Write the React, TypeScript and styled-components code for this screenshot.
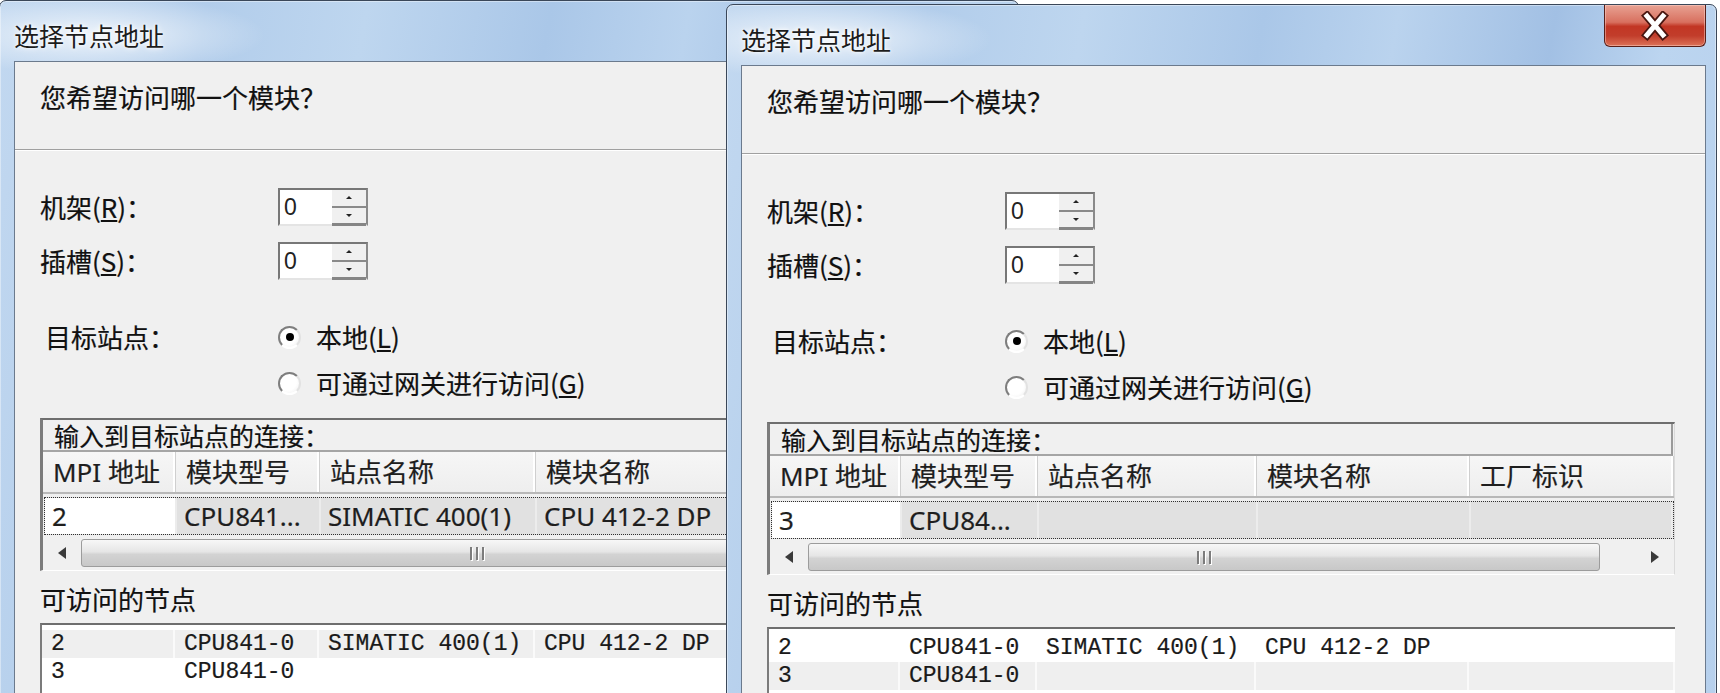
import React from 'react';
import styled, { createGlobalStyle } from 'styled-components';

const CJK = `"Noto Sans CJK SC", "Noto Sans", sans-serif`;
const UI = `"Noto Sans", "Noto Sans CJK SC", sans-serif`;
const MONO = `"Liberation Mono", "Noto Sans CJK SC", monospace`;

const GlobalStyle = createGlobalStyle`
  html, body {
    margin: 0;
    padding: 0;
    background: #fff;
  }
  body {
    font-family: ${CJK};
    color: #111;
  }
`;

const Desktop = styled.div`
  position: relative;
  width: 1720px;
  height: 693px;
  overflow: hidden;
  background: #fff;
`;

const Window = styled.div<{ $left: number; $top: number; $width: number; $z: number }>`
  position: absolute;
  left: ${p => p.$left}px;
  top: ${p => p.$top}px;
  width: ${p => p.$width}px;
  height: 760px;
  z-index: ${p => p.$z};
  box-sizing: border-box;
  display: flex;
  flex-direction: column;
  padding: 0 10px 0 14px;
  border: 1px solid #3a4759;
  border-radius: 7px 7px 0 0;
  box-shadow: inset 0 0 0 1px rgba(255, 255, 255, 0.4);
  background:
    radial-gradient(ellipse 170px 40px at 95px 34px, rgba(255, 255, 255, 0.75), rgba(255, 255, 255, 0) 100%),
    linear-gradient(100deg, #c2d8f0 0%, #b2cdeb 18%, #bed6ef 32%, #aac7e8 48%, #bad3ee 60%,
      #a2c0e4 74%, #bcd5f0 84%, #b6d0ed 100%);
`;

const TitleBar = styled.div`
  flex: none;
  height: 60px;
  display: flex;
  align-items: flex-start;
  justify-content: space-between;
`;

const Title = styled.div`
  margin-top: 21px;
  font-family: ${CJK};
  font-size: 25px;
  line-height: 26px;
  color: #1c1c1c;
  text-shadow: 0 0 6px #fff, 0 0 3px #fff;
`;

const CloseButton = styled.div`
  width: 102px;
  height: 42px;
  box-sizing: border-box;
  border: 1px solid #5a1f18;
  border-top: none;
  border-radius: 0 0 6px 6px;
  display: flex;
  align-items: center;
  justify-content: center;
  box-shadow: inset 0 0 0 1px rgba(255, 220, 210, 0.45);
  background: linear-gradient(#e8a293 0%, #d8705f 42%, #c23624 52%, #c23d2b 75%, #dc7258 100%);
`;

const Client = styled.div`
  flex: 1;
  display: flex;
  flex-direction: column;
  background: #f0f0f0;
  border: 1px solid #6b7a8d;
  -webkit-text-stroke: 0.2px currentColor;
`;

const Question = styled.div`
  flex: none;
  height: 88px;
  box-sizing: border-box;
  padding: 21px 25px 0;
  font-size: 26px;
  line-height: 28px;
  border-bottom: 1px solid #a0a0a0;
  box-shadow: 0 1px 0 #fff;
`;

const Body = styled.div`
  display: flex;
  flex-direction: column;
  padding: 38px 30px 0 25px;
`;

const Fields = styled.div`
  display: flex;
  flex-direction: column;
  gap: 16px;
`;

const FieldRow = styled.div`
  display: grid;
  grid-template-columns: 238px auto;
  align-items: center;
  height: 38px;
`;

const Label = styled.span<{ $indent?: number }>`
  font-size: 26px;
  line-height: 30px;
  padding-left: ${p => p.$indent ?? 0}px;
  white-space: nowrap;
`;

const Spin = styled.div`
  display: flex;
  width: 90px;
  height: 38px;
  box-sizing: border-box;
  background: #fff;
  border-top: 2px solid #777;
  border-left: 2px solid #777;
  border-right: 2px solid #8a8a8a;
  border-bottom: 2px solid #e4e4e4;
`;

const SpinValue = styled.div`
  flex: 1;
  padding-left: 4px;
  font-family: "Liberation Sans", sans-serif;
  font-size: 23px;
  line-height: 34px;
  color: #222;
  -webkit-text-stroke: 0;
`;

const SpinButtons = styled.div`
  width: 34px;
  display: flex;
  flex-direction: column;
  background: #f0f0f0;
  border-bottom: 3px solid #858585;
  margin-bottom: -2px;
`;

const SpinBtn = styled.div<{ $down?: boolean }>`
  flex: 1;
  display: flex;
  align-items: center;
  justify-content: center;
  & + & {
    border-top: 2px solid #8a8a8a;
  }
  &::after {
    content: '';
    border-left: 3px solid transparent;
    border-right: 3px solid transparent;
    ${p => (p.$down ? 'border-top: 3px solid #222;' : 'border-bottom: 3px solid #222;')}
  }
`;

const TargetRow = styled.div`
  display: grid;
  grid-template-columns: 238px auto;
  margin-top: 37px;
`;

const TargetLabel = styled(Label)`
  line-height: 40px;
`;

const RadioList = styled.div`
  display: flex;
  flex-direction: column;
  gap: 6px;
`;

const RadioRow = styled.div`
  display: flex;
  align-items: center;
  gap: 15px;
  height: 40px;
`;

const RadioCircle = styled.span<{ $checked?: boolean }>`
  flex: none;
  width: 23px;
  height: 23px;
  box-sizing: border-box;
  border-radius: 50%;
  border: 2px solid;
  border-color: #7e7e7e #e2e2e2 #fff #7e7e7e;
  background: radial-gradient(circle at 40% 40%, #fff 55%, #ececec 100%);
  display: flex;
  align-items: center;
  justify-content: center;
  &::after {
    content: '';
    display: ${p => (p.$checked ? 'block' : 'none')};
    width: 8px;
    height: 8px;
    border-radius: 50%;
    background: #000;
  }
`;

const GroupBox = styled.div`
  margin-top: 15px;
  display: flex;
  flex-direction: column;
  border-top: 2px solid #6e6e6e;
  border-left: 3px solid #7b7b7b;
  border-right: 1px solid #dadada;
  border-bottom: 1px solid #fff;
`;

const Caption = styled.div`
  height: 30px;
  padding-left: 11px;
  font-size: 25px;
  line-height: 30px;
  border-bottom: 2px solid #a5a5a5;
  border-right: 2px solid #9a9a9a;
  margin-right: 1px;
`;

const HeaderRow = styled.div`
  display: flex;
  height: 40px;
  border-bottom: 2px solid #b8b8b8;
  background: linear-gradient(#f6f6f6, #eeeeee);
`;

const HeaderCell = styled.div<{ $w?: number }>`
  ${p => (p.$w ? `width: ${p.$w}px; flex: none;` : 'flex: 1;')}
  box-sizing: border-box;
  padding-left: 10px;
  font-family: ${UI};
  font-size: 26px;
  line-height: 40px;
  color: #1e1e1e;
  white-space: nowrap;
  overflow: hidden;
  border-right: 1px solid #cfcfcf;
  box-shadow: inset -2px 0 0 #fff;
`;

const DataRow = styled.div`
  display: flex;
  height: 38px;
  margin: 3px 0 0 1px;
  box-sizing: border-box;
  border: 1px dotted #303030;
  background: #e1e1e1;
`;

const DataCell = styled.div<{ $w?: number; $white?: boolean }>`
  ${p => (p.$w ? `width: ${p.$w}px; flex: none;` : 'flex: 1;')}
  box-sizing: border-box;
  padding-left: 7px;
  font-family: ${UI};
  font-size: 26px;
  line-height: 36px;
  color: #1e1e1e;
  white-space: nowrap;
  overflow: hidden;
  background: ${p => (p.$white ? '#fff' : 'transparent')};
  border-right: 2px solid #ececec;
`;

const ScrollBar = styled.div`
  display: flex;
  align-items: center;
  height: 34px;
  margin-top: 1px;
  background: #f0f0f0;
`;

const ScrollArrow = styled.div<{ $right?: boolean }>`
  flex: none;
  width: 38px;
  display: flex;
  align-items: center;
  justify-content: center;
  &::after {
    content: '';
    border-top: 6px solid transparent;
    border-bottom: 6px solid transparent;
    ${p => (p.$right ? 'border-left: 8px solid #3a3a3a;' : 'border-right: 8px solid #3a3a3a;')}
  }
`;

const Thumb = styled.div`
  flex: none;
  width: 792px;
  height: 28px;
  box-sizing: border-box;
  border: 1px solid #9c9c9c;
  border-radius: 3px;
  background: linear-gradient(#f7f7f7, #e6e6e6 45%, #d3d3d3 55%, #c8c8c8);
  display: flex;
  align-items: center;
  justify-content: center;
  gap: 4px;
`;

const Grip = styled.span`
  width: 2px;
  height: 13px;
  background: #7c7c7c;
  box-shadow: 1px 1px 0 #fff;
`;

const Track = styled.div`
  flex: 1;
`;

const ListLabel = styled.div`
  margin-top: 13px;
  font-size: 26px;
  line-height: 30px;
`;

const ListBox = styled.div`
  margin-top: 9px;
  height: 200px;
  padding-top: 5px;
  background: #fff;
  border-top: 2px solid #6e6e6e;
  border-left: 2px solid #7b7b7b;
`;

const ListRow = styled.div<{ $shaded?: boolean }>`
  display: flex;
  height: 28px;
  background: ${p => (p.$shaded ? '#efefef' : '#fff')};
`;

const ListCell = styled.div<{ $w?: number }>`
  ${p => (p.$w ? `width: ${p.$w}px; flex: none;` : 'flex: 1;')}
  box-sizing: border-box;
  padding-left: 9px;
  font-family: ${MONO};
  font-size: 23px;
  line-height: 28px;
  color: #1a1a1a;
  white-space: pre;
  overflow: hidden;
  border-right: 2px solid rgba(255, 255, 255, 0.7);
`;

const CloseIcon = () => (
  <svg width="32" height="30" viewBox="0 0 32 30">
    <g strokeLinecap="square" fill="none">
      <path d="M8 5 L24 24 M24 5 L8 24" stroke="#4a1610" strokeWidth="8.5" />
      <path d="M8 5 L24 24 M24 5 L8 24" stroke="#fff" strokeWidth="5" />
    </g>
  </svg>
);

const SpinBox: React.FC<{ value: string }> = ({ value }) => (
  <Spin>
    <SpinValue>{value}</SpinValue>
    <SpinButtons>
      <SpinBtn />
      <SpinBtn $down />
    </SpinButtons>
  </Spin>
);

const headers = ['MPI 地址', '模块型号', '站点名称', '模块名称', '工厂标识'];
const nodes = [
  ['2', 'CPU841-0', 'SIMATIC 400(1)', 'CPU 412-2 DP', ''],
  ['3', 'CPU841-0', '', '', ''],
];

type DialogProps = {
  left: number;
  top: number;
  width: number;
  z: number;
  closable?: boolean;
  cols: number[];
  row: string[];
  shadedRow: number;
};

const Dialog: React.FC<DialogProps> = ({ left, top, width, z, closable, cols, row, shadedRow }) => (
  <Window $left={left} $top={top} $width={width} $z={z}>
    <TitleBar>
      <Title>选择节点地址</Title>
      {closable && (
        <CloseButton>
          <CloseIcon />
        </CloseButton>
      )}
    </TitleBar>
    <Client>
      <Question>您希望访问哪一个模块？</Question>
      <Body>
        <Fields>
          <FieldRow>
            <Label>
              机架(<u>R</u>)：
            </Label>
            <SpinBox value="0" />
          </FieldRow>
          <FieldRow>
            <Label>
              插槽(<u>S</u>)：
            </Label>
            <SpinBox value="0" />
          </FieldRow>
        </Fields>

        <TargetRow>
          <TargetLabel $indent={5}>目标站点：</TargetLabel>
          <RadioList>
            <RadioRow>
              <RadioCircle $checked />
              <Label>
                本地(<u>L</u>)
              </Label>
            </RadioRow>
            <RadioRow>
              <RadioCircle />
              <Label>
                可通过网关进行访问(<u>G</u>)
              </Label>
            </RadioRow>
          </RadioList>
        </TargetRow>

        <GroupBox>
          <Caption>输入到目标站点的连接：</Caption>
          <HeaderRow>
            {headers.map((h, i) => (
              <HeaderCell key={h} $w={cols[i]}>
                {h}
              </HeaderCell>
            ))}
          </HeaderRow>
          <DataRow>
            {row.map((c, i) => (
              <DataCell key={i} $w={i === 0 ? cols[0] - 1 : cols[i]} $white={i === 0}>
                {c}
              </DataCell>
            ))}
          </DataRow>
          <ScrollBar>
            <ScrollArrow />
            <Thumb>
              <Grip />
              <Grip />
              <Grip />
            </Thumb>
            <Track />
            <ScrollArrow $right />
          </ScrollBar>
        </GroupBox>

        <ListLabel>可访问的节点</ListLabel>
        <ListBox>
          {nodes.map((n, r) => (
            <ListRow key={r} $shaded={r === shadedRow}>
              {n.map((c, i) => (
                <ListCell key={i} $w={cols[i]}>
                  {c}
                </ListCell>
              ))}
            </ListRow>
          ))}
        </ListBox>
      </Body>
    </Client>
  </Window>
);

export default function App() {
  return (
    <>
      <GlobalStyle />
      <Desktop>
        <Dialog
          left={-1}
          top={0}
          width={1020}
          z={1}
          cols={[133, 144, 216, 213, 0]}
          row={['2', 'CPU841...', 'SIMATIC 400(1)', 'CPU 412-2 DP', '']}
          shadedRow={0}
        />
        <Dialog
          left={726}
          top={4}
          width={991}
          z={2}
          closable
          cols={[131, 137, 219, 213, 0]}
          row={['3', 'CPU84...', '', '', '']}
          shadedRow={1}
        />
      </Desktop>
    </>
  );
}
